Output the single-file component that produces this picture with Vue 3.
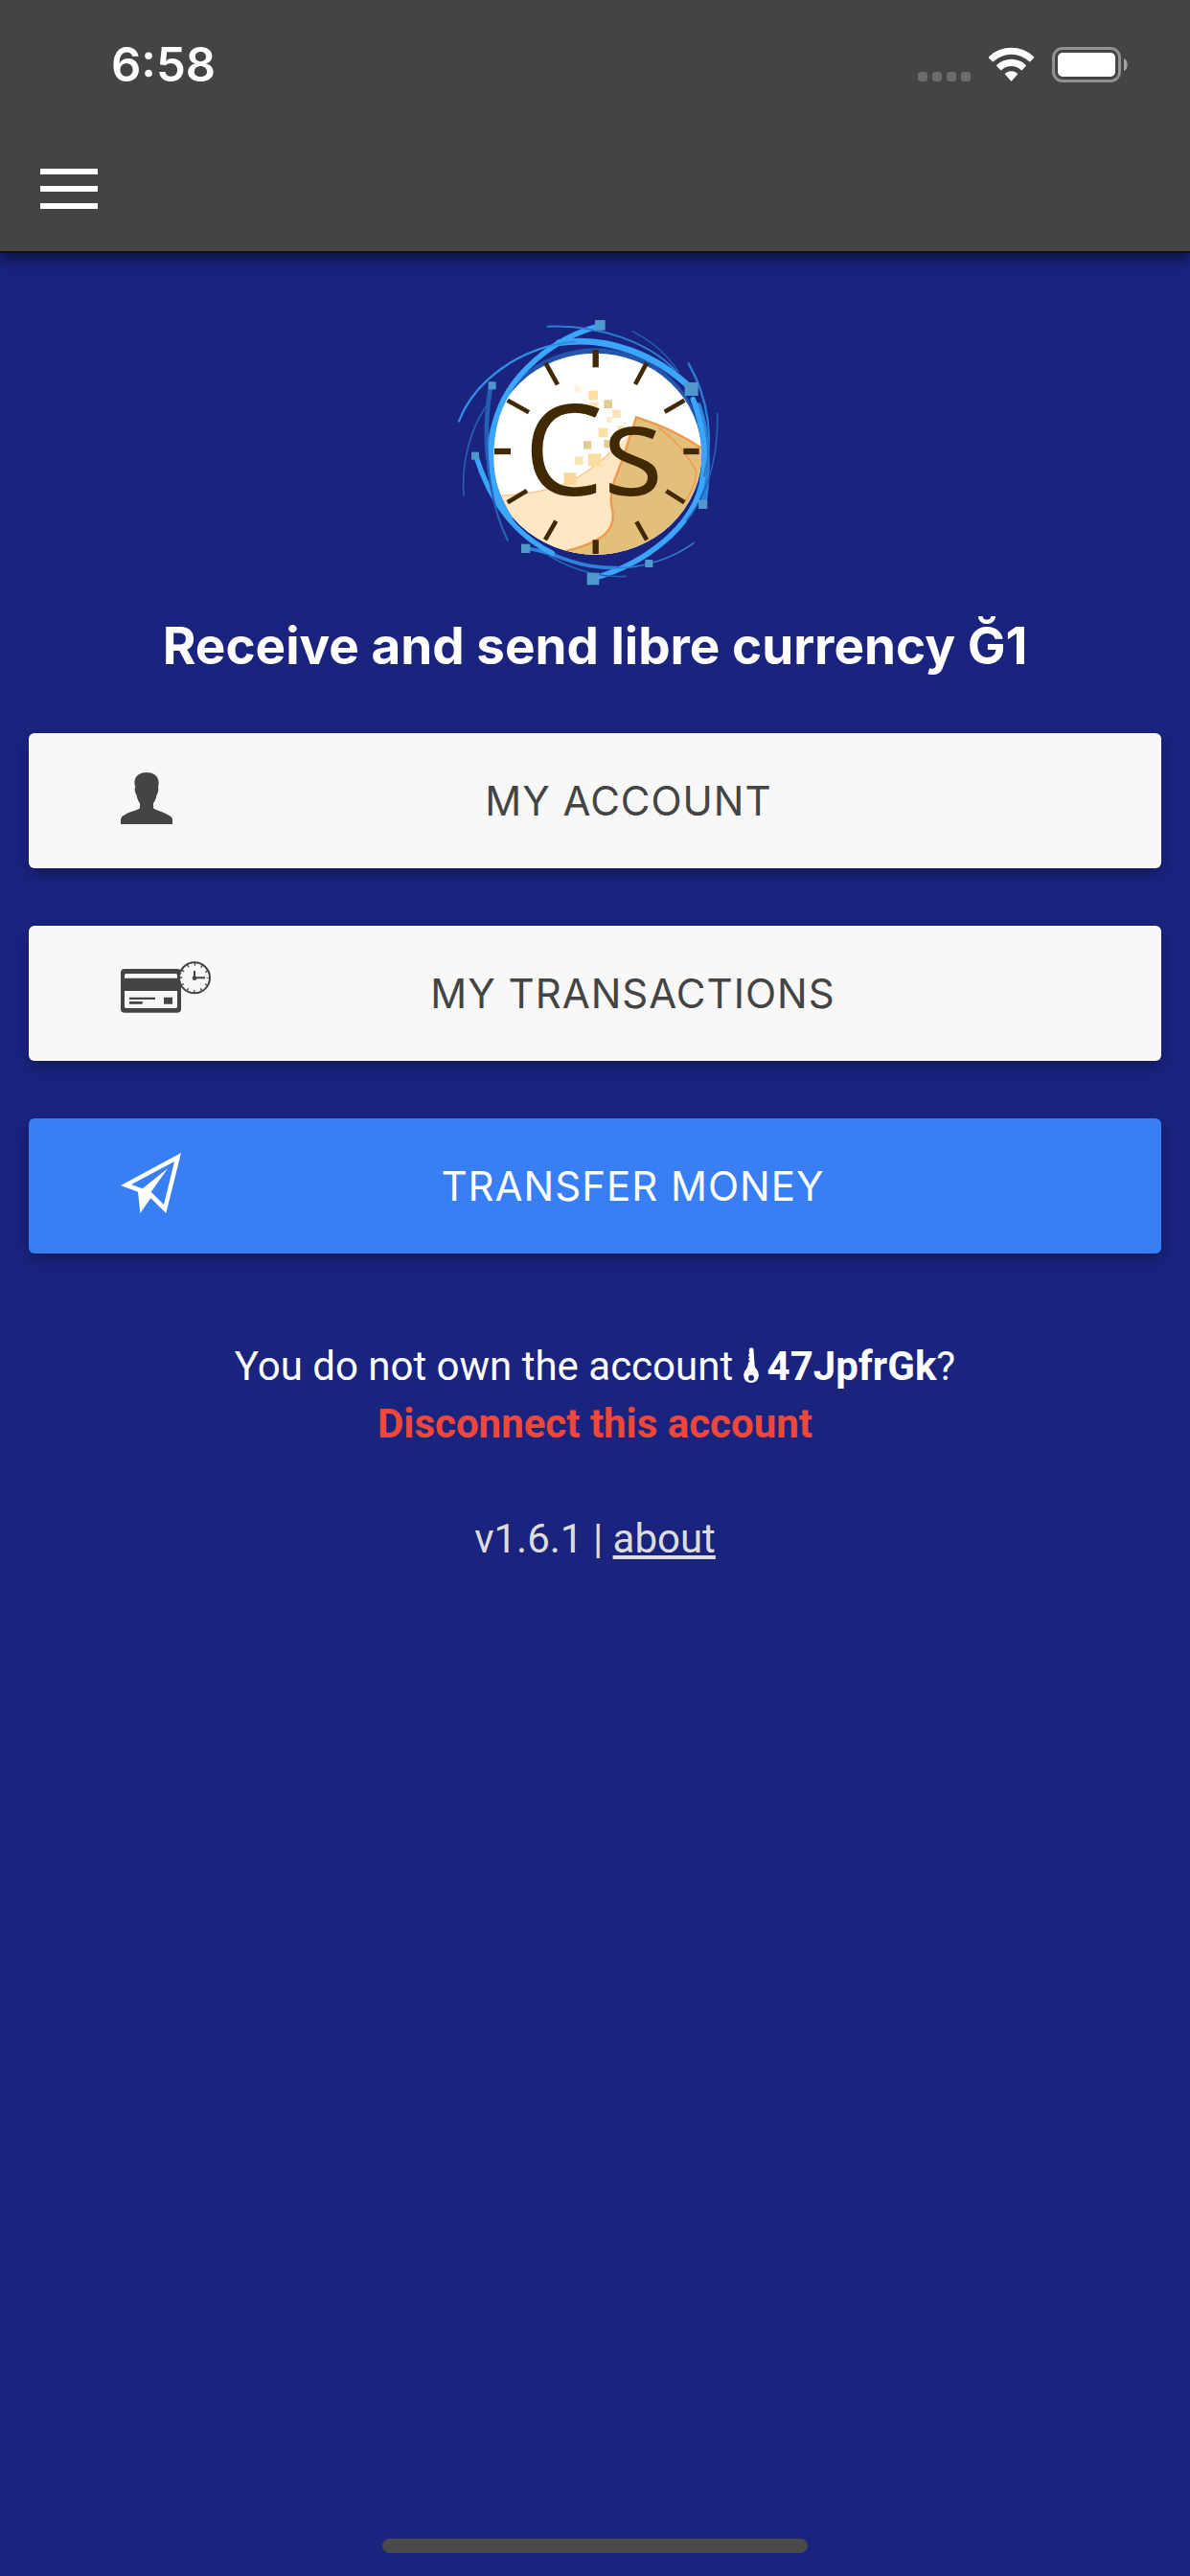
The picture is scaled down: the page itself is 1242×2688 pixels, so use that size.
<script setup>
import { ref } from "vue";

const time = ref("6:58");
const version = ref("v1.6.1");
const account = ref("47JpfrGk");

// grains of sand: x, y, size, color
const grains = [
  [418, 278, 20, "#fff0d9"],
  [463, 293, 29, "#fbdfa3"],
  [465, 330, 29, "#fbe5b8"],
  [511, 322, 26, "#e3cb95"],
  [538, 353, 25, "#fbe2ae"],
  [519, 375, 18, "#fdeccb"],
  [494, 410, 29, "#fbdfa3"],
  [553, 402, 20, "#f5e3b4"],
  [447, 451, 25, "#e3cb95"],
  [511, 447, 25, "#e3cb95"],
  [420, 499, 26, "#fbe2b4"],
  [462, 490, 40, "#fbdda0"],
  [386, 550, 38, "#fdd595"],
];

// small squares on the ring: x, y, size
const nodes = [
  [483, 72, 32],
  [764, 267, 42],
  [149, 265, 24],
  [96, 485, 24],
  [807, 635, 28],
  [252, 773, 28],
  [640, 822, 24],
  [458, 863, 38],
];

// hour marks: x1, y1, x2, y2
const marks = [
  [485, 165, 485, 220],
  [645, 206, 609, 273],
  [763, 323, 701, 359],
  [760, 483, 809, 483],
  [706, 607, 763, 643],
  [613, 703, 645, 760],
  [485, 760, 485, 804],
  [361, 701, 327, 760],
  [270, 606, 209, 643],
  [168, 483, 219, 483],
  [209, 323, 276, 361],
  [328, 206, 366, 274],
];
</script>

<template>
  <div class="page">
    <header class="header">
      <div class="status-bar">
        <span class="time">{{ time }}</span>
        <svg class="status-icons" viewBox="957 45 222 44" aria-hidden="true">
          <g fill="#6c6c6c">
            <rect x="958" y="75" width="10" height="10" rx="3" />
            <rect x="973" y="75" width="10" height="10" rx="3" />
            <rect x="988" y="75" width="10" height="10" rx="3" />
            <rect x="1003" y="75" width="10" height="10" rx="3" />
          </g>
          <g fill="#fff">
            <path d="M1032 60.500Q1031.400 59.700 1032.300 58.900A34 34 0 0 1 1078.700 58.900Q1079.600 59.700 1079 60.500L1075.200 64.200Q1074.600 64.700 1074 64.100A27 27 0 0 0 1037 64.100Q1036.400 64.700 1035.800 64.200Z" />
            <path d="M1040.300 69Q1039.800 68.400 1040.500 67.700A22 22 0 0 1 1070.500 67.700Q1071.200 68.400 1070.700 69L1066.900 73Q1066.300 73.600 1065.600 73A15 15 0 0 0 1045.400 73Q1044.700 73.600 1044.100 73Z" />
            <path d="M1049 77.600Q1048.500 77 1049.200 76.400A10 10 0 0 1 1061.800 76.400Q1062.500 77 1062 77.600L1056.200 84.300Q1055.500 85 1054.800 84.300Z" />
          </g>
          <rect x="1099.500" y="50.500" width="69" height="34" rx="9.500" fill="none" stroke="#929292" stroke-width="3" />
          <rect x="1104" y="55" width="60" height="25" rx="5" fill="#fff" />
          <path d="M1173 61C1178 63 1178 72 1173 74Z" fill="#a2a2a2" />
        </svg>
      </div>
      <button class="menu" type="button" aria-label="Menu">
        <span class="menu-line"></span>
        <span class="menu-line"></span>
        <span class="menu-line"></span>
      </button>
    </header>

    <main class="content">
      <svg class="logo" viewBox="18 0 930 930" role="img" aria-label="Cesium">
        <defs>
          <clipPath id="dial">
            <ellipse cx="484" cy="491" rx="333" ry="315" />
          </clipPath>
        </defs>
        <ellipse cx="484" cy="483" rx="338" ry="323" fill="#2456ae" />
        <g clip-path="url(#dial)">
          <rect x="140" y="160" width="700" height="660" fill="#fff" />
          <path d="M140 622Q310 622 400 582Q470 545 535 482L590 430L650 600L540 820H140Z" fill="#ffe7c4" />
          <path d="M180 622Q310 618 400 580Q470 545 535 482L560 465" fill="none" stroke="#fbc48b" stroke-width="4" />
          <path d="M612 376Q740 415 840 490V830H370L385 796Q470 778 515 742Q545 710 538 670Q525 620 547 565Q570 510 585 460Z" fill="#e2c07c" stroke="#f0984a" stroke-width="7" />
          <path d="M680 408Q755 460 800 545Q800 590 765 640" fill="none" stroke="#eda04f" stroke-width="5" />
        </g>
        <rect
          v-for="(g, i) in grains"
          :key="'g' + i"
          :x="g[0]"
          :y="g[1]"
          :width="g[2]"
          :height="g[2]"
          :fill="g[3]"
        />
        <g fill="none" stroke="#3aa5fb" stroke-linecap="round">
          <path d="M822 648C838 560 838 430 806 340" stroke-width="20" stroke="#2b83dc" />
          <path d="M155 285C135 420 130 560 225 705" stroke-width="14" stroke="#2560b5" />
          <path d="M168 400C138 480 150 580 190 655" stroke-width="16" stroke="#2f8fe6" />
          <path d="M267 787C350 790 400 848 550 848" stroke-width="11" stroke="#2b83dc" />
          <path d="M498 90C360 125 205 240 168 400C145 510 160 610 215 690" stroke-width="17" />
          <path d="M370 143C530 120 680 185 786 288" stroke-width="20" />
          <path d="M110 497C150 625 225 740 350 802" stroke-width="16" />
          <path d="M480 880C640 835 790 720 818 580C835 500 822 400 790 320" stroke-width="17" />
          <path d="M57 388C105 265 245 155 420 140" stroke-width="7" stroke="#2f8fe6" />
          <path d="M335 92C500 85 655 145 735 230" stroke-width="6" stroke="#2b7ed2" />
          <path d="M600 107C655 135 710 180 745 235" stroke-width="4" stroke="#2560b5" />
          <path d="M776 208C840 320 855 450 825 560" stroke-width="7" stroke="#2b7ed2" />
          <path d="M866 365C870 500 835 620 770 700" stroke-width="5" stroke="#2560b5" />
          <path d="M72 620C65 520 90 420 140 345" stroke-width="5" stroke="#2560b5" />
          <path d="M161 277C135 380 130 600 210 762" stroke-width="7" stroke="#255fb4" />
          <path d="M340 810C430 865 520 878 580 874" stroke-width="5" stroke="#2560b5" />
          <path d="M540 848C640 850 730 815 792 770" stroke-width="5" stroke="#2b7ed2" />
        </g>
        <rect
          v-for="(n, i) in nodes"
          :key="'n' + i"
          :x="n[0]"
          :y="n[1]"
          :width="n[2]"
          :height="n[2]"
          fill="#4f98cc"
        />
        <g stroke="#412a03">
          <line
            v-for="(m, i) in marks"
            :key="'m' + i"
            :x1="m[0]"
            :y1="m[1]"
            :x2="m[2]"
            :y2="m[3]"
            :stroke-width="i % 3 === 0 ? 19 : 14"
          />
        </g>
        <text class="logo-text" x="260" y="621">Cs</text>
      </svg>

      <h1 class="title">Receive and send libre currency Ğ1</h1>

      <div class="actions">
        <button class="action" type="button">
          <svg class="icon icon-person" viewBox="378 198 162 162" aria-hidden="true">
            <path d="M378 360V344Q379 337 388 332C402 323 420 319 434 313Q438 311 438 307V295C432 288 429 277 427 268Q422 262 422 247L424 244Q421 236 421 228C423 208 438 198 459 198S495 208 497 228Q497 236 495 244L496 247Q496 262 491 268C489 277 486 288 480 295V307Q480 311 484 313C498 319 516 324 530 333Q539 338 540 344V360Z" fill="currentColor" />
          </svg>
          <span class="label">MY ACCOUNT</span>
        </button>
        <button class="action" type="button">
          <svg class="icon" viewBox="378 786 189 189" aria-hidden="true">
            <path fill-rule="evenodd" d="M390 813H555Q567 813 567 825V938Q567 950 555 950H390Q378 950 378 938V825Q378 813 390 813ZM395 828Q390 828 390 833V842H555V833Q555 828 550 828ZM390 882V931Q390 936 395 936H550Q555 936 555 931V882Z" fill="currentColor" />
            <path d="M405 902H486V909H405ZM405 915H446V923H405ZM513 902H540V923H513Z" fill="currentColor" />
            <circle cx="609" cy="841" r="48" fill="#f8f8f8" stroke="currentColor" stroke-width="6" />
            <circle class="ticks" cx="609" cy="841" r="42" />
            <path d="M609 819V841H642" fill="none" stroke="currentColor" stroke-width="6" />
            <circle cx="609" cy="842" r="7" fill="currentColor" />
          </svg>
          <span class="label">MY TRANSACTIONS</span>
        </button>
        <button class="action action-primary" type="button">
          <svg class="icon" viewBox="378 220 189 189" aria-hidden="true">
            <path fill-rule="evenodd" d="M567 220L520 409L472 362L439 409L432 342L378 322ZM546 247L411 319L446 332L526 268L473 342L513 382Z" fill="currentColor" />
          </svg>
          <span class="label">TRANSFER MONEY</span>
        </button>
      </div>

      <p class="owner">
        You do not own the account
        <svg class="key" viewBox="41 47 48 112" aria-hidden="true">
          <path fill-rule="evenodd" d="M59 50Q65 45 72 50L76 102Q76 110 82 116Q89 123 89 134Q88 158 65 159Q42 158 41 134Q42 122 50 115Q55 109 55 101L57 94L61 90L57 86V81L61 78L57 74V68L61 65L58 61ZM65 134A9 9 0 1 0 65 152A9 9 0 1 0 65 134Z" fill="currentColor" />
        </svg>
        <b>{{ account }}</b>?<br />
        <a class="disconnect" href="#">Disconnect this account</a>
      </p>

      <p class="version">{{ version }} | <a class="about" href="#">about</a></p>
    </main>

    <div class="home-indicator"></div>
  </div>
</template>

<style>
body {
  background: #1a237e;
}
</style>

<style scoped>
.page {
  box-sizing: border-box;
  display: flex;
  flex-direction: column;
  min-height: 100vh;
  padding-bottom: 24px;
  background: #1a237e;
  color: #fff;
  font-family: Roboto, sans-serif;
  font-size: 42px;
  line-height: 60px;
}

.header {
  display: flex;
  flex-direction: column;
  align-items: flex-start;
  background: #444;
  border-bottom: 2px solid #111;
  box-shadow: 0 6px 15px rgba(0, 0, 0, 0.5);
}

.status-bar {
  box-sizing: border-box;
  display: flex;
  justify-content: space-between;
  align-items: center;
  width: 100%;
  height: 134px;
  padding: 0 63px 0 116px;
}

.time {
  padding-top: 2px;
  font-family: Inter, sans-serif;
  font-size: 49px;
  font-weight: 600;
}

.status-icons {
  width: 222px;
  height: 44px;
}

.menu {
  display: flex;
  flex-direction: column;
  justify-content: center;
  gap: 12px;
  height: 128px;
  padding: 0 42px 2px;
  background: none;
  border: 0;
}

.menu-line {
  width: 60px;
  height: 6px;
  background: #fff;
}

.content {
  flex: 1;
  padding: 46px 30px 0;
  text-align: center;
}

.logo {
  display: block;
  width: 310px;
  height: 310px;
  margin: 0 auto;
}

.logo-text {
  fill: #412a03;
  font-family: "Open Sans", sans-serif;
  font-size: 395px;
}

.title {
  margin: 24px 0 60px;
  font-family: Inter, sans-serif;
  font-size: 53px;
  font-weight: 700;
  line-height: 61px;
}

.actions {
  display: flex;
  flex-direction: column;
  gap: 60px;
}

.action {
  display: flex;
  align-items: center;
  height: 141px;
  padding: 0 80px 0 96px;
  background: #f8f8f8;
  border: 0;
  border-radius: 6px;
  box-shadow: 0 6px 15px rgba(0, 0, 0, 0.26);
  color: #444;
  font-family: Inter, sans-serif;
  font-size: 42px;
  letter-spacing: 1px;
}

.action-primary {
  background: #387ef5;
  color: #fff;
}

.icon {
  width: 63px;
  height: 63px;
  margin-bottom: 6px;
  overflow: visible;
}

.icon-person {
  width: 54px;
  height: 54px;
}

.ticks {
  fill: none;
  stroke: currentColor;
  stroke-width: 8px;
  stroke-dasharray: 4 18;
  stroke-dashoffset: 2;
}

.label {
  flex: 1;
}

.owner {
  margin: 88px 0 60px;
}

.key {
  width: 16px;
  height: 37px;
  margin-right: 9px;
  vertical-align: -3px;
}

.disconnect {
  color: #ef473a;
  font-weight: 700;
  text-decoration: none;
}

.version {
  margin: 0;
  color: #ddd;
}

.about {
  color: #ddd;
}

.home-indicator {
  align-self: center;
  width: 444px;
  height: 15px;
  border-radius: 8px;
  background: #4a4a4a;
}
</style>
